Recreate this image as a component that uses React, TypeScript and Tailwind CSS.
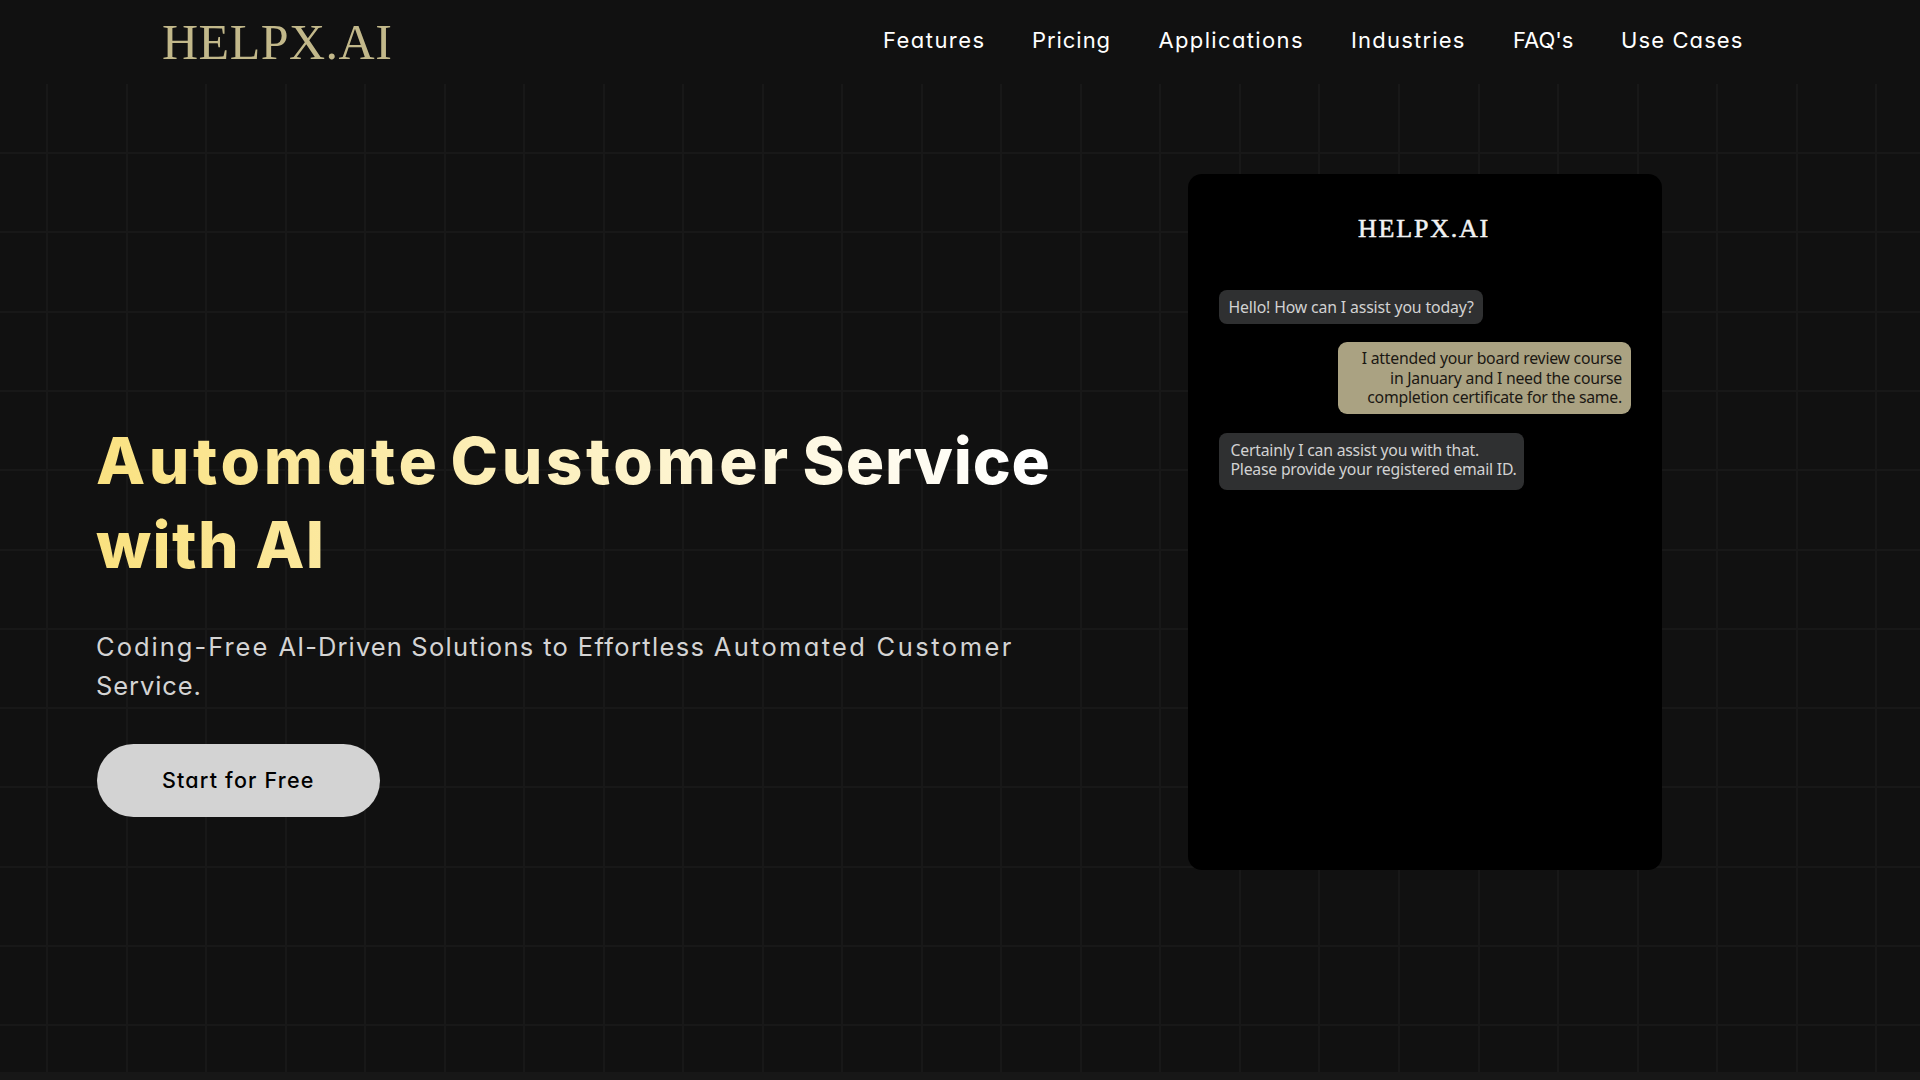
import clsx from "clsx";

const navLinks = [
  { label: "Features", width: "w-[149px]", tracking: "tracking-[1.45px]" },
  { label: "Pricing", width: "w-[126.5px]", tracking: "tracking-[0.95px]" },
  { label: "Applications", width: "w-[192.5px]", tracking: "tracking-[1.35px]" },
  { label: "Industries", width: "w-[162px]", tracking: "tracking-[1.2px]" },
  { label: "FAQ's", width: "w-[108px]", tracking: "tracking-[0px]" },
  { label: "Use Cases", width: "w-[123px]", tracking: "tracking-[1.1px]" },
];

function Header() {
  return (
    <header className="flex h-[84px] items-start justify-between bg-[#111111] pl-[162px] pr-[176px]">
      <a
        href="#"
        className="mt-[11px] whitespace-nowrap font-['Liberation_Serif',serif] text-[50px] leading-[62px] tracking-[0.5px] text-[#c2b88a]"
      >
        HELPX.AI
      </a>
      <nav className="mt-[22px] flex">
        {navLinks.map((link) => (
          <a
            key={link.label}
            href="#"
            className={clsx(
              "block whitespace-nowrap text-[22px] leading-[37px] text-white",
              link.width,
              link.tracking
            )}
          >
            {link.label}
          </a>
        ))}
      </nav>
    </header>
  );
}

function ChatPreview() {
  return (
    <div className="mt-[90px] h-[696px] w-[474px] shrink-0 rounded-[14px] bg-black px-[31px] font-['Noto_Sans',sans-serif] text-[15.8px] leading-[19.5px]">
      <div className="pr-[2px] pt-[39px] text-center font-['Liberation_Serif',serif] text-[26px] leading-[32px] tracking-[1.8px] text-[#f2f2f2] [-webkit-text-stroke:0.5px_#f2f2f2]">
        HELPX.AI
      </div>
      <div className="mt-[45px] flex flex-col items-start">
        <p className="h-[34px] w-[264px] whitespace-nowrap rounded-lg bg-[#2f3031] pl-[9.5px] pt-[8px] tracking-[-0.14px] text-[#d2d2d2]">
          Hello! How can I assist you today?
        </p>
        <p className="mt-[17.5px] h-[72.5px] w-[293px] self-end whitespace-nowrap rounded-[9px] bg-[#aaa282] pr-[9px] pt-[7.5px] text-right tracking-[-0.25px] text-[#1b1813]">
          I attended your board review course
          <br />
          in January and I need the course
          <br />
          completion certificate for the same.
        </p>
        <p className="mt-[19px] h-[57px] w-[305px] whitespace-nowrap rounded-lg bg-[#2f3031] pl-[11.5px] pt-[7.5px] tracking-[-0.23px] text-[#d2d2d2]">
          Certainly I can assist you with that.
          <br />
          Please provide your registered email ID.
        </p>
      </div>
    </div>
  );
}

function Hero() {
  return (
    <section className="flex h-[988px] bg-[#111111] bg-[repeating-linear-gradient(90deg,transparent_0_46px,#181818_46px_48px,transparent_48px_79.53px),repeating-linear-gradient(180deg,transparent_0_68px,#181818_68px_70px,transparent_70px_79.3px)] pl-[96px]">
      <div className="w-[1092px] shrink-0 pt-[335px]">
        <h1 className="w-[960px] whitespace-nowrap bg-[linear-gradient(80deg,#fae17e_0%,#ffffff_96%)] bg-clip-text text-[64px] font-extrabold leading-[84px] text-transparent">
          <span className="tracking-[3.6px]">Automate</span>
          <span className="tracking-[-4px]"> </span>
          <span className="tracking-[3.5px]">Customer</span>
          <span className="tracking-[-3px]"> </span>
          <span className="tracking-[0.8px]">Service</span>
          <br />
          <span className="tracking-[1.3px]">with AI</span>
        </h1>
        <p className="mt-[39.5px] whitespace-nowrap text-[25.5px] leading-[39px] text-[#d4d4d4]">
          <span className="tracking-[2px]">Coding-Free </span>
          <span className="tracking-[1.1px]">AI-Driven </span>
          <span className="tracking-[1.35px]">Solutions to </span>
          <span className="tracking-[1.35px]">Effortless </span>
          <span className="tracking-[2.3px]">Automated </span>
          <span className="tracking-[2.5px]">Customer</span>
          <br />
          <span className="tracking-[0.9px]">Service.</span>
        </p>
        <button className="ml-[0.5px] mt-[39.5px] flex h-[73px] w-[283.5px] items-center justify-center whitespace-nowrap rounded-full bg-[#d3d3d3] pb-px text-[21.5px] font-medium tracking-[1.2px] text-black">
          Start for Free
        </button>
      </div>
      <ChatPreview />
    </section>
  );
}

export default function App() {
  return (
    <div className="h-[1080px] w-[1920px] overflow-hidden bg-[#171717] font-['Inter',sans-serif] [font-feature-settings:'cv11']">
      <Header />
      <Hero />
    </div>
  );
}
